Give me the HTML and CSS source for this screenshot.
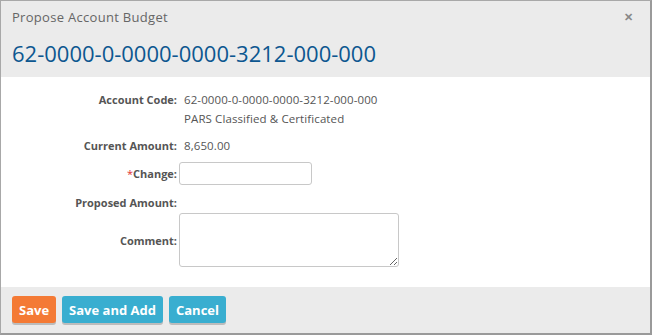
FILE: index.html
```html
<!doctype html>
<html lang="en">
<head>
    <meta charset="UTF-8">
    <title>Propose Account Budget</title>
    <link rel="stylesheet" href="styles.css">
</head>
<body>
    <div class="dialog">
        <div class="dialog-head">
            <div class="title-bar">
                <span class="title">Propose Account Budget</span>
                <span class="close">&#x2715;</span>
            </div>
            <h1 class="account">62-0000-0-0000-0000-3212-000-000</h1>
        </div>

        <form class="dialog-body">
            <div class="row row-code">
                <label>Account Code:</label>
                <div class="value">
                    62-0000-0-0000-0000-3212-000-000<br>
                    PARS Classified &amp; Certificated
                </div>
            </div>
            <div class="row row-current">
                <label>Current Amount:</label>
                <div class="value">8,650.00</div>
            </div>
            <div class="row row-change">
                <label for="change"><span class="req">*</span>Change:</label>
                <input type="text" id="change" name="change">
            </div>
            <div class="row row-proposed">
                <label>Proposed Amount:</label>
                <div class="value"></div>
            </div>
            <div class="row row-comment">
                <label for="comment">Comment:</label>
                <textarea id="comment" name="comment"></textarea>
            </div>
        </form>

        <div class="dialog-foot">
            <button class="btn btn-save">Save</button>
            <button class="btn btn-info">Save and Add</button>
            <button class="btn btn-info">Cancel</button>
        </div>
    </div>
</body>
</html>
```

FILE: styles.css
```css
body {
    margin: 0;
    font-family: "Open Sans", Arial, sans-serif;
    background: #fff;
}
.dialog {
    width: 652px;
    height: 335px;
    box-sizing: border-box;
    border: 1px solid #a8a8a8;
    border-right: 2px solid #9a9a9a;
    border-bottom: 2px solid #9a9a9a;
    display: flex;
    flex-direction: column;
}
.dialog-head {
    background-color: #ebebeb;
    height: 76px;
    padding: 0 11px;
}
.title-bar {
    display: flex;
    justify-content: space-between;
    align-items: center;
    height: 31px;
}
.title {
    font-size: 13px;
    color: #666;
    letter-spacing: 0.3px;
}
.close {
    font-size: 11px;
    color: #888;
    font-weight: bold;
    margin-right: 6px;
}
.account {
    margin: 0;
    font-size: 22px;
    font-weight: 400;
    color: #0d5790;
    line-height: 32px;
    margin-top: 5px;
}
.dialog-body {
    flex: 1;
    margin: 0;
    padding-top: 13px;
}
.row {
    display: flex;
    align-items: center;
}
.row label {
    width: 176px;
    text-align: right;
    font-size: 11px;
    font-weight: bold;
    color: #555;
    flex-shrink: 0;
}
.row-code {
    align-items: flex-start;
}
.row-code label,
.row-current label {
    line-height: 19px;
}
.value {
    padding-left: 7px;
    font-size: 11.5px;
    line-height: 19px;
    color: #555;
    letter-spacing: 0.1px;
}
.req {
    color: #e03030;
    font-weight: normal;
}
.row-current {
    margin-top: 8px;
}
.row-change {
    margin-top: 7px;
}
.row-proposed {
    margin-top: 8px;
    height: 19px;
}
.row-comment {
    margin-top: 1px;
}
input[type="text"],
textarea {
    margin-left: 2px;
    border: 1px solid #c8c8c8;
    border-radius: 3px;
    box-sizing: border-box;
    font-family: inherit;
    font-size: 12px;
    padding: 3px 5px;
}
input[type="text"] {
    width: 133px;
    height: 23px;
}
textarea {
    width: 220px;
    height: 54px;
}
.dialog-foot {
    background-color: #ebebeb;
    height: 46px;
    padding: 9px 11px 0;
    box-sizing: border-box;
    display: flex;
    align-items: flex-start;
    gap: 6px;
}
.btn {
    font-family: inherit;
    font-size: 13px;
    font-weight: bold;
    color: #fff;
    border: none;
    border-radius: 3px;
    height: 27px;
    padding: 0 7px;
    cursor: pointer;
    box-shadow: 0 2px 0 rgba(0, 0, 0, 0.2);
}
.btn-save {
    background-color: #f47a35;
}
.btn-info {
    background-color: #39aed0;
}
```
